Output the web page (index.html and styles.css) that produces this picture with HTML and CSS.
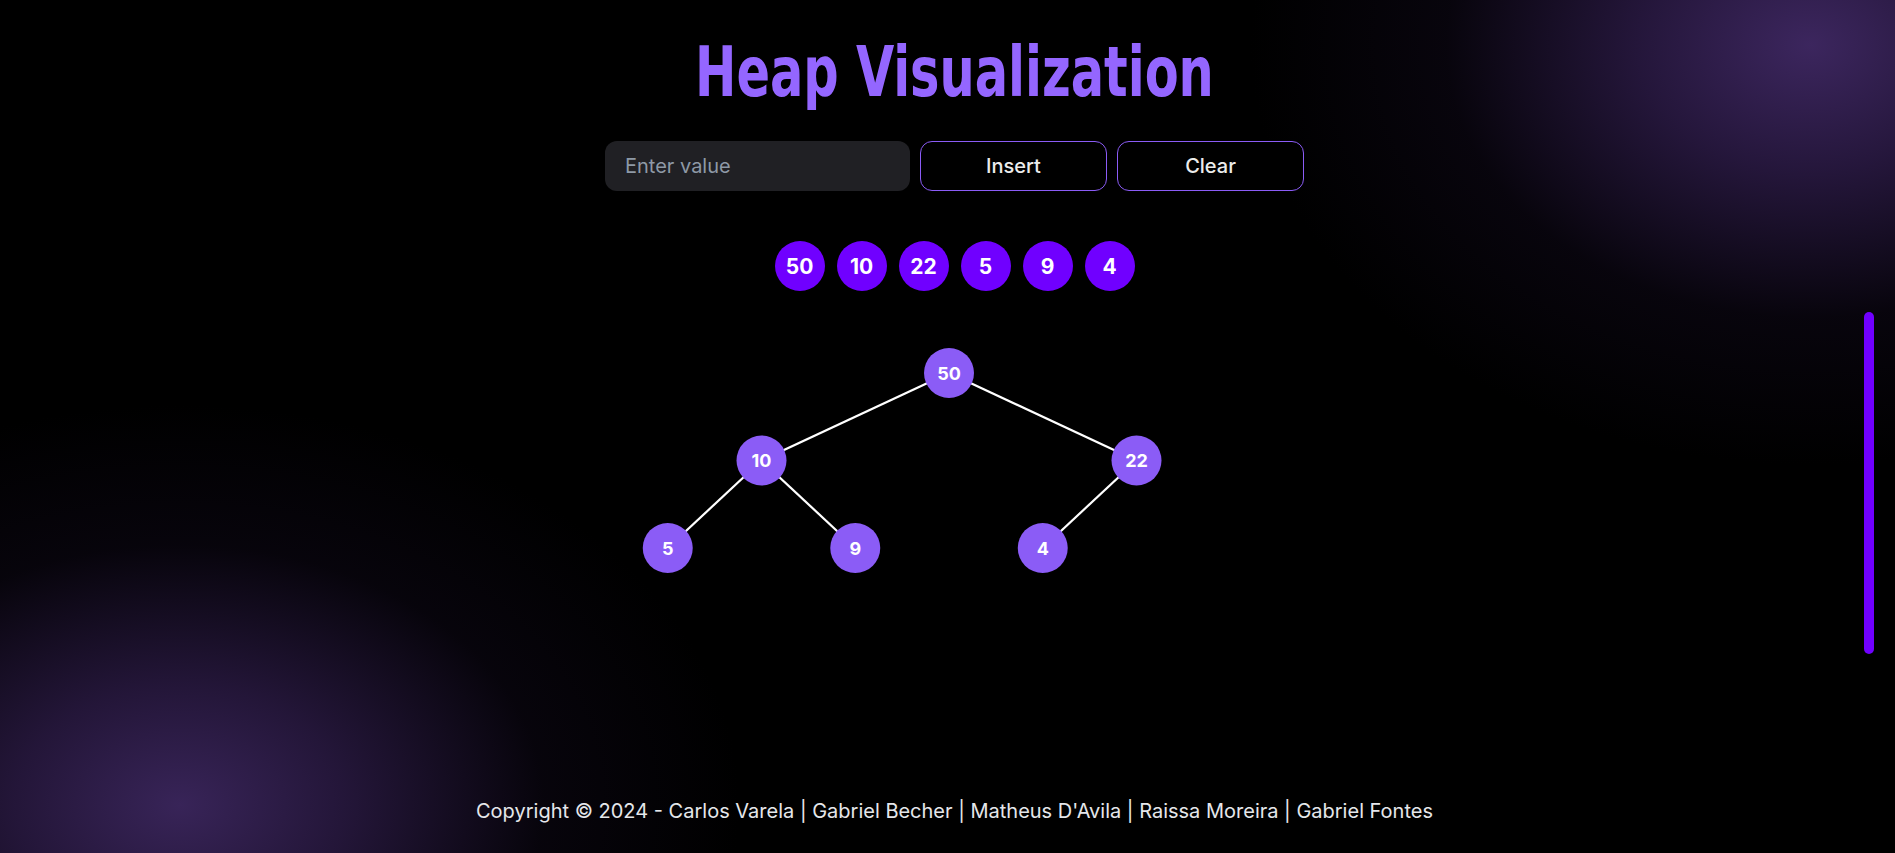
FILE: index.html
```html
<!DOCTYPE html>
<html lang="en">
<head>
<meta charset="utf-8">
<title>Heap Visualization</title>
<link rel="stylesheet" href="styles.css">
</head>
<body>
<div class="page">
  <h1 class="title"><span class="title-text">Heap Visualization</span></h1>
  <div class="controls">
    <input class="value-input" type="text" placeholder="Enter value">
    <button class="btn">Insert</button>
    <button class="btn">Clear</button>
  </div>
  <div class="array">
    <div class="array-item">50</div>
    <div class="array-item">10</div>
    <div class="array-item">22</div>
    <div class="array-item">5</div>
    <div class="array-item">9</div>
    <div class="array-item">4</div>
  </div>
  <svg class="tree" width="750" height="275" viewBox="0 0 750 275">
    <g class="edges">
      <line x1="375" y1="50" x2="187.5" y2="137.5"/>
      <line x1="375" y1="50" x2="562.5" y2="137.5"/>
      <line x1="187.5" y1="137.5" x2="93.75" y2="225"/>
      <line x1="187.5" y1="137.5" x2="281.25" y2="225"/>
      <line x1="562.5" y1="137.5" x2="468.75" y2="225"/>
    </g>
    <g class="node"><circle cx="375" cy="50" r="25"/><text x="375" y="50">50</text></g>
    <g class="node"><circle cx="187.5" cy="137.5" r="25"/><text x="187.5" y="137.5">10</text></g>
    <g class="node"><circle cx="562.5" cy="137.5" r="25"/><text x="562.5" y="137.5">22</text></g>
    <g class="node"><circle cx="93.75" cy="225" r="25"/><text x="93.75" y="225">5</text></g>
    <g class="node"><circle cx="281.25" cy="225" r="25"/><text x="281.25" y="225">9</text></g>
    <g class="node"><circle cx="468.75" cy="225" r="25"/><text x="468.75" y="225">4</text></g>
  </svg>
  <footer class="footer">Copyright © 2024 - Carlos Varela | Gabriel Becher | Matheus D'Avila | Raissa Moreira | Gabriel Fontes</footer>
</div>
<div class="scroll-thumb"></div>
</body>
</html>
```
FILE: styles.css
```css
html, body {
  margin: 0;
  padding: 0;
  height: 100%;
  overflow: hidden;
}

body {
  background:
    radial-gradient(ellipse 560px 420px at 1810px 45px, rgba(60, 38, 94, 1) 0%, rgba(46, 28, 74, 0.8) 30%, rgba(22, 13, 36, 0.35) 65%, rgba(0, 0, 0, 0) 100%),
    radial-gradient(ellipse 560px 400px at 180px 805px, rgba(56, 36, 88, 1) 0%, rgba(44, 27, 70, 0.8) 30%, rgba(20, 12, 33, 0.35) 65%, rgba(0, 0, 0, 0) 100%),
    #000;
  font-family: Inter, "Noto Sans", sans-serif;
  color: #e5e7eb;
}

.page {
  box-sizing: border-box;
  height: 100vh;
  padding-left: 14px;
  display: flex;
  flex-direction: column;
  align-items: center;
}

.title {
  margin: 32px 0 0;
  height: 80px;
  font-family: "DejaVu Sans Condensed", "DejaVu Sans", sans-serif;
  font-weight: 700;
  font-size: 70px;
  line-height: 80px;
  color: #9466ff;
  white-space: nowrap;
  display: flex;
  justify-content: center;
}

.title-text {
  display: inline-block;
  transform: scaleX(0.785);
  transform-origin: center;
}

.controls {
  margin-top: 29px;
  display: flex;
  gap: 10px;
}

.value-input {
  box-sizing: border-box;
  width: 305px;
  height: 50px;
  padding: 0 20px;
  border: none;
  border-radius: 12px;
  background: #202024;
  color: #e5e7eb;
  font-family: Inter, sans-serif;
  font-size: 20px;
  outline: none;
}

.value-input::placeholder {
  color: #8e99a6;
}

.btn {
  box-sizing: border-box;
  width: 187px;
  height: 50px;
  border: 1px solid #8b5cf6;
  border-radius: 12px;
  background: #000;
  color: #ececec;
  font-family: Inter, sans-serif;
  font-size: 20px;
  font-weight: 500;
}

.array {
  margin-top: 50px;
  display: flex;
  gap: 12px;
}

.array-item {
  width: 50px;
  height: 50px;
  border-radius: 50%;
  background: #7000ff;
  color: #fff;
  font-weight: 700;
  font-size: 21px;
  display: flex;
  align-items: center;
  justify-content: center;
}

.tree {
  margin-top: 32px;
  margin-left: -11px;
  display: block;
}

.edges line {
  stroke: #ffffff;
  stroke-width: 2.2;
}

.node circle {
  fill: #8b5cf6;
}

.node text {
  fill: #ffffff;
  font-family: Inter, sans-serif;
  font-weight: 700;
  font-size: 18px;
  text-anchor: middle;
  dominant-baseline: central;
}

.footer {
  margin-top: auto;
  padding-bottom: 30px;
  font-size: 20px;
  line-height: 24px;
  color: #e5e7eb;
  white-space: nowrap;
}

.scroll-thumb {
  position: fixed;
  right: 21px;
  top: 312px;
  width: 10px;
  height: 342px;
  border-radius: 5px;
  background: #7000ff;
}
```
